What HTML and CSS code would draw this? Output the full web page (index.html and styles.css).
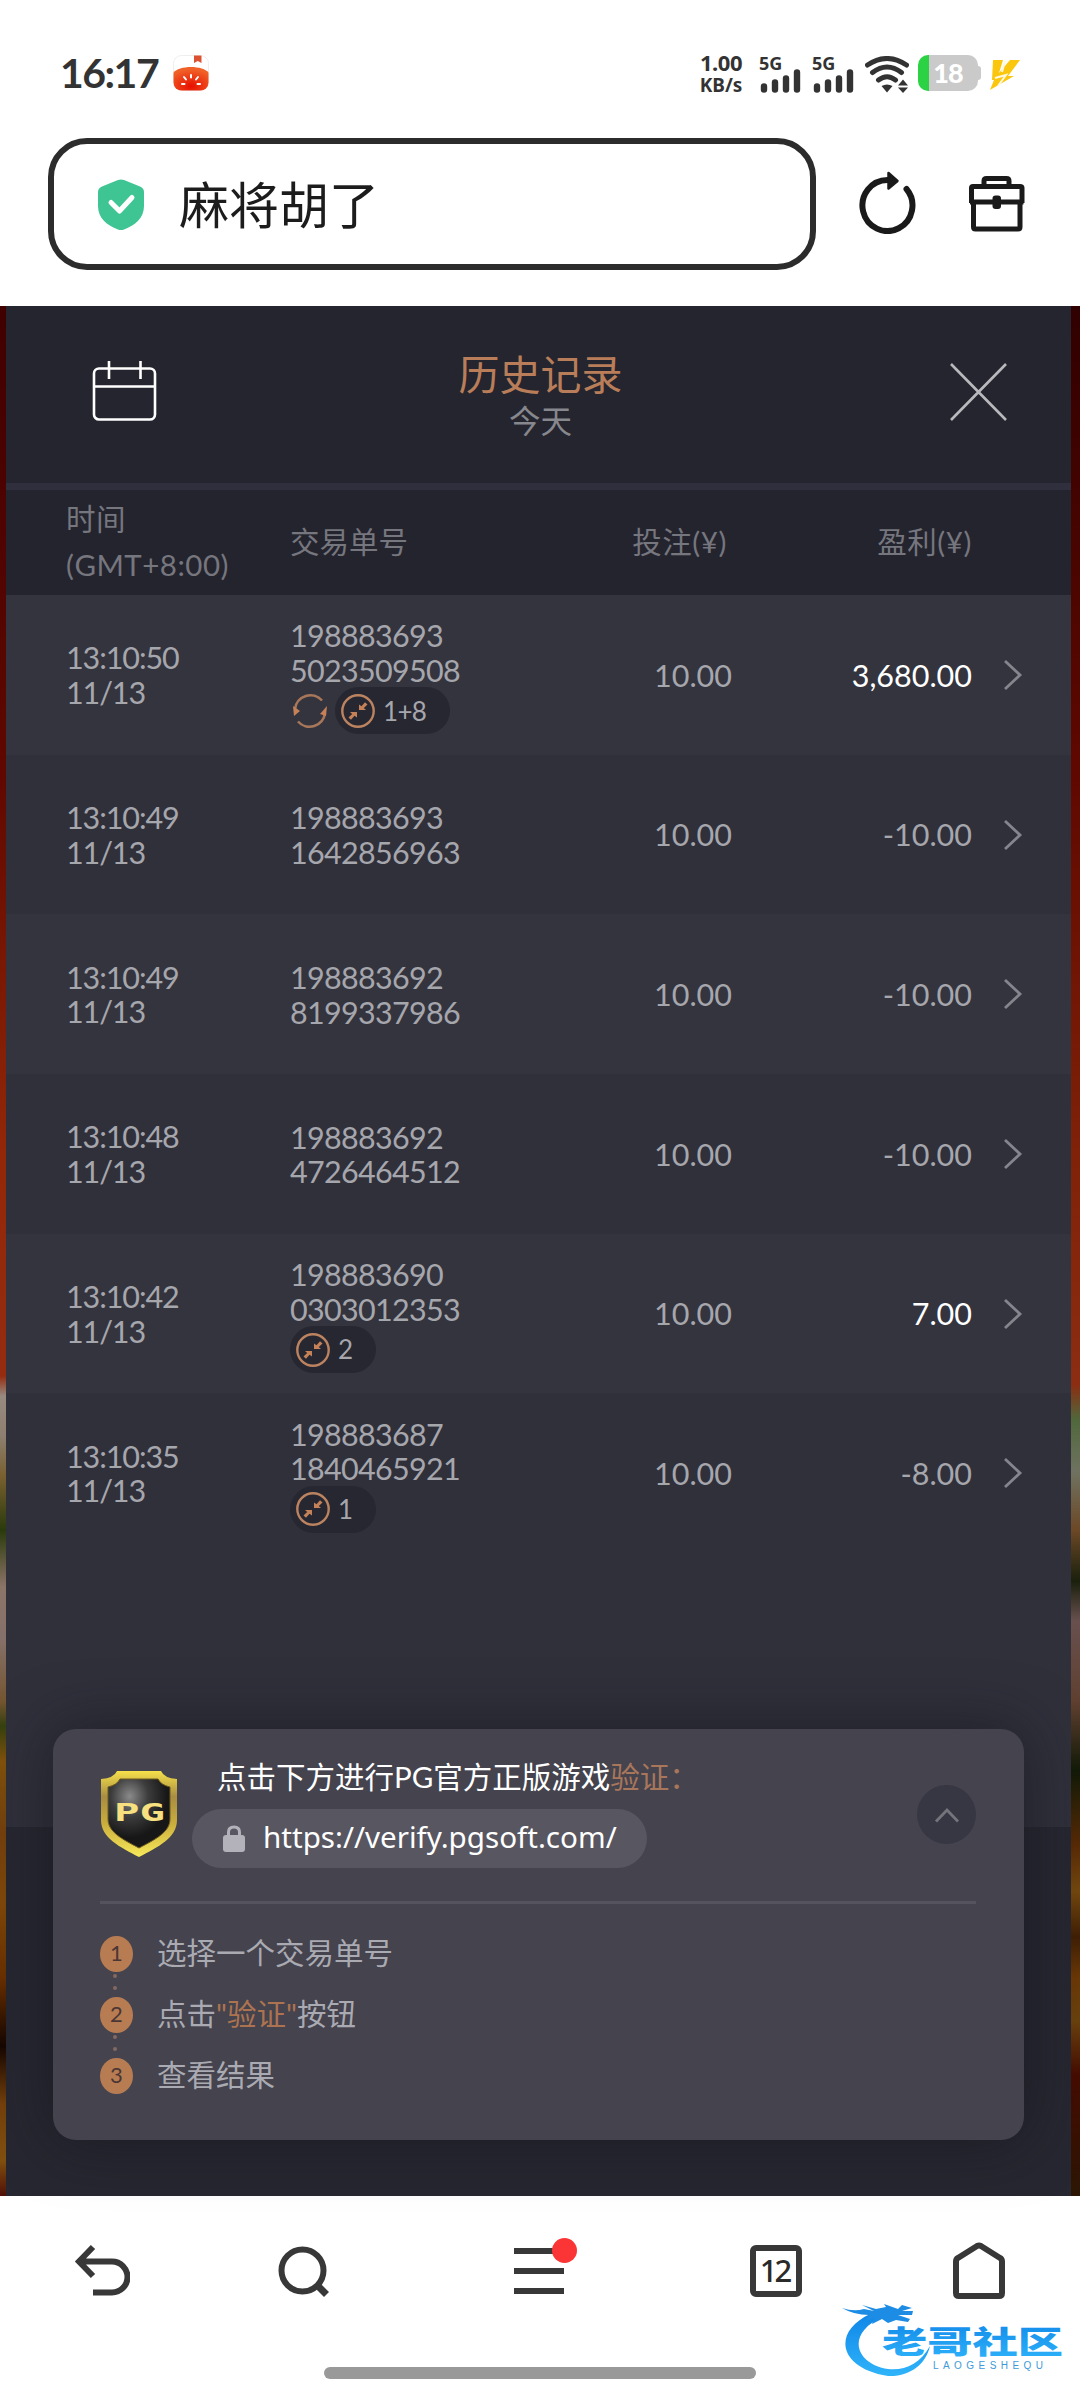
FILE: index.html
```html
<!DOCTYPE html>
<html lang="zh-CN">
<head>
    <meta charset="UTF-8">
    <meta name="viewport" content="width=device-width, initial-scale=1.0">
    <title>历史记录</title>
    <link rel="stylesheet" href="styles.css">
</head>
<body>
    <!-- 公用图标 -->
    <svg class="symbols" width="0" height="0">
        <symbol id="chevron" viewBox="0 0 20 32">
            <path d="M2 2L17 16L2 30" fill="none" stroke="#85858e" stroke-width="2.8"/>
        </symbol>
        <symbol id="collapse" viewBox="0 0 34 34">
            <circle cx="17" cy="17" r="15.7" fill="none" stroke="#bc8360" stroke-width="2.4"/>
            <path d="M18 16V10.500L20.500 12.300L24 8.200L26.500 10.500L22.800 14L25 16Z" fill="#c58158"/>
            <path d="M16 18V23.500L13.500 21.700L10 25.800L7.500 23.500L11.200 20L9 18Z" fill="#c58158"/>
        </symbol>
        <symbol id="signal" viewBox="0 0 42 28">
            <path d="M5 21.500V24.500M16 17.500V24.500M27 13.500V24.500M38 7.500V24.500" stroke="#333" stroke-width="6.400" stroke-linecap="round"/>
        </symbol>
    </svg>

    <!-- 状态栏 -->
    <div class="status-bar">
        <span class="clock">16:17</span>
        <svg class="tomato" width="36" height="36" viewBox="0 0 36 36">
            <defs>
                <radialGradient id="tomatoFill" cx=".5" cy=".8" r=".7"><stop offset="0" stop-color="#e80f00"/><stop offset="1" stop-color="#f06128"/></radialGradient>
                <clipPath id="tomatoClip"><rect x=".5" y=".5" width="35" height="35" rx="8"/></clipPath>
            </defs>
            <rect x=".5" y=".5" width="35" height="35" rx="8" fill="#fff" stroke="#eee"/>
            <g clip-path="url(#tomatoClip)">
                <path d="M0 18C6 10 30 10 36 18V36H0Z" fill="url(#tomatoFill)"/>
                <path d="M21 0H28.500V8L24.800 6L21 8Z" fill="#dc5230"/>
            </g>
            <path d="M18 20V22.500M11 22L13 24.500M25 22L23 24.500M9 29L11.500 29M27 29L24.500 29" stroke="#fff" stroke-width="2" stroke-linecap="round"/>
        </svg>
        <div class="net-speed"><span class="speed-num">1.00</span><span class="speed-unit">KB/s</span></div>
        <div class="sim"><span>5G</span><svg width="42" height="28"><use href="#signal"/></svg></div>
        <div class="sim"><span>5G</span><svg width="42" height="28"><use href="#signal"/></svg></div>
        <svg class="wifi" width="44" height="38" viewBox="0 0 44 38">
            <path d="M2.500 9Q22 -4 41.500 9M7.500 16.500Q22 5.500 36.500 16.500M13.500 24Q22 17.500 30.500 24" fill="none" stroke="#333" stroke-width="5" stroke-linecap="round"/>
            <path d="M16.500 30Q22 27 27.500 30L22 36.500ZM33 29.500L38 23.500L43 29.500ZM33 31.500L38 37L43 31.500Z" fill="#333"/>
        </svg>
        <div class="battery"><span>18</span></div>
        <svg class="bolt" width="32" height="34" viewBox="0 0 32 34">
            <path d="M4 2H14L10 15L21 2H31L19 18H25L1 32L5 22H3Z" fill="#fbc70e"/>
            <path d="M6 20L17 17L9 28M16 3L13 14" fill="none" stroke="#fff8dd" stroke-width="2"/>
        </svg>
    </div>

    <!-- 地址栏 -->
    <div class="address-row">
        <div class="address-bar">
            <svg width="46" height="52" viewBox="0 0 46 52">
                <path d="M20 1Q23 -.2 26 1L42 7.500Q46 9.300 46 13V27C46 39 37 46.500 26 50.500Q23 51.600 20 50.500C9 46.500 0 39 0 27V13Q0 9.300 4 7.500Z" fill="#3ec593"/>
                <path d="M13 23.500L21.500 32L34 18.500" fill="none" stroke="#fff" stroke-width="5" stroke-linecap="round" stroke-linejoin="round"/>
            </svg>
            <span>麻将胡了</span>
        </div>
        <svg class="refresh" width="60" height="64" viewBox="0 0 60 64">
            <path d="M29.500 10A25 25.500 0 1 0 48.500 19" fill="none" stroke="#1a1a1a" stroke-width="6" stroke-linecap="round"/>
            <path d="M30.500 3L39.500 11L30.500 18.500Z" fill="#1a1a1a" stroke="#1a1a1a" stroke-width="2.500" stroke-linejoin="round"/>
        </svg>
        <svg class="toolbox" width="58" height="58" viewBox="0 0 58 58">
            <g fill="none" stroke="#1a1a1a" stroke-width="5" stroke-linejoin="round">
                <path d="M16 11V6Q16 3.500 18.500 3.500H38.500Q41 3.500 41 6V11"/>
                <path d="M3.500 28V13Q3.500 11.500 5 11.500H52Q54 11.500 54 13V28"/>
                <path d="M2 27H55.500M5.500 27V52Q5.500 54 7.500 54H50Q52 54 52 52V27"/>
            </g>
            <rect x="24.500" y="20.500" width="8.500" height="13.500" rx="3" fill="#1a1a1a"/>
        </svg>
    </div>

    <!-- 游戏页面 -->
    <div class="game">
        <div class="history">
            <div class="history-header">
                <svg class="calendar" width="66" height="62" viewBox="0 0 66 62">
                    <rect x="2" y="8.500" width="61" height="51" rx="5" fill="none" stroke="#fff" stroke-width="2.600"/>
                    <path d="M2 26.500H63M17 1V19M48.500 1V19" stroke="#fff" stroke-width="2.600"/>
                </svg>
                <div class="heading">
                    <div class="title">历史记录</div>
                    <div class="subtitle">今天</div>
                </div>
                <svg class="close" width="57" height="58" viewBox="0 0 57 58">
                    <path d="M1 1L56 57M56 1L1 57" stroke="#b9b9bd" stroke-width="2.600"/>
                </svg>
            </div>

            <div class="row table-head">
                <div class="time">时间<br>(GMT+8:00)</div>
                <div>交易单号</div>
                <div class="bet">投注(¥)</div>
                <div class="win">盈利(¥)</div>
            </div>

            <div class="list">
                <div class="row record">
                    <div class="time">13:10:50<br>11/13</div>
                    <div class="order">198883693<br>5023509508
                        <div class="tags">
                            <svg class="spin" width="36" height="36" viewBox="0 0 36 36">
                                <path d="M3 16A15.500 15.500 0 0 1 30 7.500M33 20A15.500 15.500 0 0 1 6 28.500" fill="none" stroke="#a8775a" stroke-width="2.600"/>
                                <path d="M1 13L8 18L2 23ZM35 13L28 21L34 23Z" fill="#c58158"/>
                            </svg>
                            <span class="pill"><svg width="34" height="34"><use href="#collapse"/></svg>1+8</span>
                        </div>
                    </div>
                    <div class="bet">10.00</div>
                    <div class="win positive">3,680.00</div>
                    <svg class="arrow" width="20" height="32"><use href="#chevron"/></svg>
                </div>
                <div class="row record">
                    <div class="time">13:10:49<br>11/13</div>
                    <div class="order">198883693<br>1642856963</div>
                    <div class="bet">10.00</div>
                    <div class="win">-10.00</div>
                    <svg class="arrow" width="20" height="32"><use href="#chevron"/></svg>
                </div>
                <div class="row record">
                    <div class="time">13:10:49<br>11/13</div>
                    <div class="order">198883692<br>8199337986</div>
                    <div class="bet">10.00</div>
                    <div class="win">-10.00</div>
                    <svg class="arrow" width="20" height="32"><use href="#chevron"/></svg>
                </div>
                <div class="row record">
                    <div class="time">13:10:48<br>11/13</div>
                    <div class="order">198883692<br>4726464512</div>
                    <div class="bet">10.00</div>
                    <div class="win">-10.00</div>
                    <svg class="arrow" width="20" height="32"><use href="#chevron"/></svg>
                </div>
                <div class="row record">
                    <div class="time">13:10:42<br>11/13</div>
                    <div class="order">198883690<br>0303012353
                        <div class="tags"><span class="pill"><svg width="34" height="34"><use href="#collapse"/></svg>2</span></div>
                    </div>
                    <div class="bet">10.00</div>
                    <div class="win positive">7.00</div>
                    <svg class="arrow" width="20" height="32"><use href="#chevron"/></svg>
                </div>
                <div class="row record">
                    <div class="time">13:10:35<br>11/13</div>
                    <div class="order">198883687<br>1840465921
                        <div class="tags"><span class="pill"><svg width="34" height="34"><use href="#collapse"/></svg>1</span></div>
                    </div>
                    <div class="bet">10.00</div>
                    <div class="win">-8.00</div>
                    <svg class="arrow" width="20" height="32"><use href="#chevron"/></svg>
                </div>
            </div>

            <!-- 验证卡片 -->
            <div class="verify-card">
                <div class="verify-top">
                    <svg class="pg-logo" width="78" height="88" viewBox="0 0 78 88">
                        <defs>
                            <linearGradient id="gold" x1="0" y1="0" x2="0" y2="1"><stop offset="0" stop-color="#f6e04a"/><stop offset=".3" stop-color="#a88d42"/><stop offset=".6" stop-color="#c9ac3c"/><stop offset="1" stop-color="#f8e95a"/></linearGradient>
                            <radialGradient id="metal" cx=".35" cy=".25" r=".6"><stop offset="0" stop-color="#8a8a8a"/><stop offset=".5" stop-color="#3c3c3c"/><stop offset="1" stop-color="#171717"/></radialGradient>
                        </defs>
                        <path d="M17 1H61Q64 8 77 9V50C77 68 58 77 39 87C20 77 1 68 1 50V9Q14 8 17 1Z" fill="url(#gold)"/>
                        <path d="M20 9H58Q61 15 70 17V49C70 62 56 69 39 78C22 69 8 62 8 49V17Q17 15 20 9Z" fill="url(#metal)" stroke="#6d5a20"/>
                        <text x="14" y="51" class="pg-text" textLength="51" lengthAdjust="spacingAndGlyphs">PG</text>
                    </svg>
                    <div class="verify-info">
                        <div class="verify-title">点击下方进行PG官方正版游戏<span>验证：</span></div>
                        <div class="verify-url">
                            <svg width="22" height="28" viewBox="0 0 22 28">
                                <rect x="0" y="10" width="22" height="17" rx="3" fill="#b3b2ba"/>
                                <path d="M5.500 11V7Q5.500 2 11 2T16.500 7V11" fill="none" stroke="#b3b2ba" stroke-width="3"/>
                            </svg>
                            <span>https://verify.pgsoft.com/</span>
                        </div>
                    </div>
                    <div class="fold">
                        <svg width="26" height="16" viewBox="0 0 26 16"><path d="M2 14.500L13 3L24 14.500" fill="none" stroke="#74747d" stroke-width="2.800"/></svg>
                    </div>
                </div>
                <div class="steps">
                    <div class="step"><b>1</b><span>选择一个交易单号</span></div>
                    <div class="step-dots"><i></i><i></i></div>
                    <div class="step"><b>2</b><span>点击<em>"验证"</em>按钮</span></div>
                    <div class="step-dots"><i></i><i></i></div>
                    <div class="step"><b>3</b><span>查看结果</span></div>
                </div>
            </div>
        </div>
    </div>

    <!-- 底部导航 -->
    <div class="nav-bar">
        <div class="nav-icons">
            <svg width="56" height="56" viewBox="0 0 56 56">
                <path d="M19 4L5 18.500L19 33M6 18.500H38A15.500 15.500 0 0 1 38 49.500H19" fill="none" stroke="#383838" stroke-width="6"/>
            </svg>
            <svg width="56" height="56" viewBox="0 0 56 56">
                <ellipse cx="26.500" cy="27.500" rx="21" ry="21" fill="none" stroke="#383838" stroke-width="6"/>
                <path d="M41 42L50.500 51.500" stroke="#383838" stroke-width="7"/>
            </svg>
            <div class="menu">
                <svg width="50" height="56" viewBox="0 0 50 56">
                    <path d="M0 9H50M0 29H50M0 49H50" stroke="#383838" stroke-width="6"/>
                </svg>
                <span class="dot"></span>
            </div>
            <div class="tabs">12</div>
            <svg width="56" height="62" viewBox="0 0 56 62">
                <path d="M5 21.500Q5 19 7 18L26 6Q28 5 30 6L49 18Q51 19 51 21.500V53Q51 56 48 56H8Q5 56 5 53Z" fill="none" stroke="#383838" stroke-width="6"/>
            </svg>
        </div>
        <div class="home-indicator"></div>
    </div>

    <!-- 水印 -->
    <svg class="watermark" width="224" height="78" viewBox="0 0 224 78">
        <defs>
            <linearGradient id="blue" x1="0" y1="0" x2="0" y2="1"><stop offset="0" stop-color="#0f86e8"/><stop offset="1" stop-color="#2fb4fa"/></linearGradient>
        </defs>
        <path d="M28 12C-10 30 -4 66 46 74C68 75 84 62 88 44C78 62 62 69 46 67C14 62 2 32 42 14Z" fill="url(#blue)"/>
        <path d="M0 6Q12 10 22 7L32 9L20 3L34 7L44 5L42 2L56 7L60 3L70 6L60 9L71 9L70 13L56 13L68 17L66 20L54 18L46 21L40 17L30 22L32 16L22 20L27 13Q12 13 0 6Z" fill="#1d8ce4"/>
        <text x="40" y="51" class="wm-name" textLength="181" lengthAdjust="spacingAndGlyphs" fill="url(#blue)">老哥社区</text>
        <text x="91" y="67" class="wm-latin" textLength="110">LAOGESHEQU</text>
    </svg>
</body>
</html>
```

FILE: styles.css
```css
/* 全局样式 */
* {
    box-sizing: border-box;
}
body {
    margin: 0;
    width: 1080px;
    height: 2400px;
    position: relative;
    overflow: hidden;
    background-color: #fff;
    color: #2a2a2a;
    font-family: Lato, "Noto Sans CJK SC", sans-serif;
}
svg {
    display: block;
    flex-shrink: 0;
}
.symbols {
    position: absolute;
}

/* 状态栏 */
.status-bar {
    height: 138px;
    padding: 46px 59px 0 60px;
    display: flex;
    align-items: flex-start;
    color: #333;
}
.clock {
    width: 113px;
    font-size: 41px;
    line-height: 54px;
    font-weight: 700;
    letter-spacing: -1.5px;
}
.tomato {
    margin-top: 9px;
}
.net-speed {
    margin-left: auto;
    width: 46px;
    padding-top: 4px;
    display: flex;
    flex-direction: column;
    align-items: center;
    font-family: "Noto Sans", sans-serif;
    font-weight: 700;
}
.speed-num {
    font-size: 22px;
    line-height: 24px;
    letter-spacing: -0.5px;
}
.speed-unit {
    font-size: 19px;
    line-height: 22px;
}
.sim {
    width: 42px;
    margin-left: 11px;
    padding-top: 7px;
    font-family: "Noto Sans", sans-serif;
    font-size: 18px;
    font-weight: 700;
    line-height: 20px;
}
.net-speed + .sim {
    margin-left: 15px;
}
.sim svg {
    margin-top: -8px;
}
.wifi {
    margin: 10px 0 0 11px;
}
.battery {
    position: relative;
    width: 60px;
    height: 36px;
    margin: 9px 0 0 9px;
    border-radius: 10px;
    background: linear-gradient(90deg, #2bd344 11px, #cacaca 11px);
    color: #fff;
    font-size: 27px;
    font-weight: 900;
    line-height: 36px;
    letter-spacing: -1px;
    text-align: center;
}
.battery::after {
    content: "";
    position: absolute;
    right: -3px;
    top: 11px;
    width: 3px;
    height: 14px;
    border-radius: 0 3px 3px 0;
    background-color: #cacaca;
}
.bolt {
    margin: 12px 0 0 11px;
}

/* 地址栏 */
.address-row {
    height: 168px;
    padding-left: 48px;
    display: flex;
    align-items: flex-start;
}
.address-bar {
    width: 768px;
    height: 132px;
    padding: 2px 0 0 44px;
    display: flex;
    align-items: center;
    gap: 35px;
    border: 6px solid #2c2c2c;
    border-radius: 39px;
    font-size: 50px;
    line-height: 70px;
    color: #1c1c1c;
}
.refresh {
    margin: 32px 0 0 42px;
}
.toolbox {
    margin: 37px 0 0 50px;
}

/* 游戏背景, 面板两侧露出一点 */
.game {
    height: 1890px;
    padding: 0 9px 0 6px;
    background:
        linear-gradient(180deg, #400000 0, #600800 25%, #932808 45%, #952c10 1070px, #978a80 1090px, #8d8070 1130px, #7a6030 1170px, #2a3a0c 1224px, #8c7468 1281px, #85706a 1333px, #745630 1396px, #354010 1420px, #80520c 1455px, #74400e 1528px, #80480a 1597px, #6a3000 1671px, #160602 1740px, #74400c 1798px, #80500f 1855px, #501008 1890px) left / 6px 100% no-repeat,
        linear-gradient(180deg, #300000 0, #600800 25%, #802208 45%, #8c2c10 1078px, #50683c 1114px, #6f7260 1166px, #6c4826 1224px, #1a200c 1275px, #68504e 1315px, #604030 1396px, #121a08 1465px, #582a06 1539px, #74480e 1585px, #401f06 1631px, #6a3806 1671px, #6a420e 1715px, #460c02 1769px, #2c1604 1890px) right / 9px 100% no-repeat;
}
.history {
    height: 1890px;
    display: flex;
    flex-direction: column;
    background-color: #272731;
}
.history-header {
    height: 184px;
    padding: 0 64px 0 86px;
    display: grid;
    grid-template-columns: 66px 1fr 57px;
    align-items: start;
    border-bottom: 7px solid #2f2f3d;
    background-color: #24252e;
}
.calendar {
    margin-top: 54px;
}
.heading {
    padding: 43px 27px 0 0;
    text-align: center;
}
.title {
    font-size: 41px;
    line-height: 52px;
    color: #b97e59;
}
.subtitle {
    font-size: 31.5px;
    line-height: 40px;
    color: #87878e;
}
.close {
    margin-top: 57px;
}

/* 记录表格 */
.row {
    display: grid;
    grid-template-columns: 224px 240px 202px 240px 1fr;
    align-items: center;
    padding-left: 60px;
}
.table-head {
    height: 105px;
    background-color: #24242e;
    color: #76767e;
    font-size: 29.5px;
    line-height: 46px;
    padding-bottom: 1px;
}
.table-head .time {
    letter-spacing: 0.5px;
}
.table-head .bet {
    padding-right: 5px;
}
.table-head .bet,
.table-head .win {
    letter-spacing: 0.6px;
}
.bet,
.win {
    text-align: right;
}
.list {
    height: 1232px;
    background-color: #30303b;
}
.record {
    height: 159.7px;
    color: #a6a6ad;
    font-size: 30.5px;
    line-height: 34.6px;
}
.record:nth-child(odd) {
    background-color: #34343e;
}
.record:last-child,
.record:nth-child(even) {
    background-color: #30303b;
}
.record .time {
    letter-spacing: -1.1px;
}
.record .order {
    padding-top: 1px;
    letter-spacing: -0.7px;
}
.record .positive {
    color: #fff;
}
.arrow {
    margin-left: 31px;
}
.tags {
    margin-bottom: -2px;
    display: flex;
    align-items: center;
    gap: 7px;
}
.pill {
    height: 47px;
    padding: 0 24px 0 6px;
    display: flex;
    align-items: center;
    gap: 8px;
    border-radius: 24px;
    background-color: #262730;
    font-size: 26px;
}
.spin {
    margin-left: 2px;
}

/* 验证卡片 */
.verify-card {
    position: absolute;
    left: 53px;
    top: 1729px;
    width: 971px;
    height: 411px;
    padding: 0 48px 0 47px;
    border-radius: 23px;
    background-color: #44434e;
    box-shadow: 0 0 60px rgba(20, 20, 28, 0.6);
}
.verify-top {
    height: 175px;
    display: flex;
    align-items: flex-start;
    border-bottom: 3px solid #54535e;
}
.pg-logo {
    margin-top: 41px;
}
.pg-text {
    font: 700 25px "DejaVu Sans Mono", monospace;
    fill: #f6e080;
}
.verify-info {
    margin-left: 14px;
}
.verify-title {
    padding-left: 25px;
    margin-top: 26px;
    font-size: 29.5px;
    line-height: 44px;
    color: #fff;
    white-space: nowrap;
}
.verify-title span {
    color: #a8765b;
}
.verify-url {
    width: 455px;
    height: 59px;
    margin-top: 10px;
    padding-left: 31px;
    display: flex;
    align-items: center;
    gap: 18px;
    border-radius: 30px;
    background-color: #575661;
    color: #fff;
    font-family: "Noto Sans", sans-serif;
    font-size: 29.6px;
}
.verify-url span {
    margin-top: -4px;
}
.fold {
    width: 59px;
    height: 59px;
    margin: 56px 0 0 auto;
    display: flex;
    align-items: center;
    justify-content: center;
    border-radius: 50%;
    background-color: #373743;
}
.steps {
    padding-top: 32px;
}
.step {
    height: 36px;
    display: flex;
    align-items: center;
    gap: 24px;
    font-size: 29.5px;
    line-height: 36px;
    color: #aaaab2;
}
.step span {
    margin-top: -3px;
}
.step b {
    width: 33px;
    height: 36px;
    border-radius: 50%;
    background-color: #b87c52;
    color: #4a3634;
    font-size: 22px;
    line-height: 34px;
    font-weight: 400;
    text-align: center;
}
.step em {
    font-style: normal;
    color: #ad7350;
}
.step-dots {
    height: 25px;
    padding: 2px 0 0 13px;
    display: flex;
    flex-direction: column;
    gap: 8px;
}
.step-dots i {
    width: 4px;
    height: 4px;
    border-radius: 50%;
    background-color: #85685f;
}

/* 底部导航 */
.nav-bar {
    height: 204px;
    display: flex;
    flex-direction: column;
    align-items: center;
}
.nav-icons {
    width: 100%;
    height: 171px;
    padding: 44px 73px 0 74px;
    display: grid;
    grid-template-columns: 202px 238px 236px 201px 56px;
    align-items: start;
}
.nav-icons > svg:first-child,
.nav-icons > svg:nth-child(2) {
    margin-top: 3px;
}
.menu {
    position: relative;
    width: 50px;
    margin-top: 2px;
}
.menu .dot {
    position: absolute;
    right: -13px;
    top: -4px;
    width: 25px;
    height: 25px;
    border-radius: 50%;
    background-color: #fb3535;
}
.tabs {
    width: 52px;
    height: 52px;
    margin-top: 5px;
    border: 6px solid #383838;
    border-radius: 6px;
    font-family: "Noto Sans", sans-serif;
    font-size: 31px;
    line-height: 39px;
    letter-spacing: -3px;
    text-indent: -3px;
    text-align: center;
    font-weight: 500;
}
.home-indicator {
    width: 432px;
    height: 12px;
    border-radius: 6px;
    background-color: #999;
}

/* 水印 */
.watermark {
    position: absolute;
    left: 842px;
    top: 2302px;
}
.wm-name {
    font: 900 31px "Noto Sans CJK SC", sans-serif;
}
.wm-latin {
    font: 10px "Liberation Sans", sans-serif;
    fill: #3d9ad8;
}
```
